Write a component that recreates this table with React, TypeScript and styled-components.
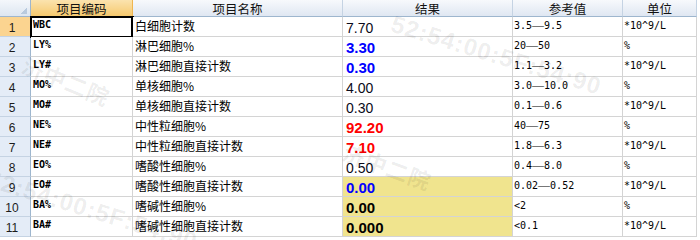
import styled, { createGlobalStyle, css } from 'styled-components';
import { Fragment } from 'react';

const GlobalStyle = createGlobalStyle`
  html, body {
    margin: 0;
    padding: 0;
    background: #ffffff;
  }
  #root {
    width: 700px;
    height: 240px;
    overflow: hidden;
  }`

const GRID = '#d4d4d4';
const HEAD_LINE = '#9eb6ce';

type Tone = 'plain' | 'blue' | 'red' | 'bold';

type LabRow = {
  code: string,
  name: string,
  value: string,
  tone: Tone,
  flagged?: boolean,
  low?: string,
  high?: string,
  unit: string
};

const UNIT = '*10^9/L';

const rows: LabRow[] = [
  { code: 'WBC', name: '白细胞计数', value: '7.70', tone: 'plain', low: '3.5', high: '9.5', unit: UNIT },
  { code: 'LY%', name: '淋巴细胞%', value: '3.30', tone: 'blue', low: '20', high: '50', unit: '%' },
  { code: 'LY#', name: '淋巴细胞直接计数', value: '0.30', tone: 'blue', low: '1.1', high: '3.2', unit: UNIT },
  { code: 'MO%', name: '单核细胞%', value: '4.00', tone: 'plain', low: '3.0', high: '10.0', unit: '%' },
  { code: 'MO#', name: '单核细胞直接计数', value: '0.30', tone: 'plain', low: '0.1', high: '0.6', unit: UNIT },
  { code: 'NE%', name: '中性粒细胞%', value: '92.20', tone: 'red', low: '40', high: '75', unit: '%' },
  { code: 'NE#', name: '中性粒细胞直接计数', value: '7.10', tone: 'red', low: '1.8', high: '6.3', unit: UNIT },
  { code: 'EO%', name: '嗜酸性细胞%', value: '0.50', tone: 'plain', low: '0.4', high: '8.0', unit: '%' },
  { code: 'EO#', name: '嗜酸性细胞直接计数', value: '0.00', tone: 'blue', flagged: true, low: '0.02', high: '0.52', unit: UNIT },
  { code: 'BA%', name: '嗜碱性细胞%', value: '0.00', tone: 'bold', flagged: true, low: '<2', unit: '%' },
  { code: 'BA#', name: '嗜碱性细胞直接计数', value: '0.000', tone: 'bold', flagged: true, low: '<0.1', unit: UNIT },
];

const columns = ['项目编码', '项目名称', '结果', '参考值', '单位'];

const Frame = styled.div`
  position: relative;
  width: 700px;
  height: 240px;
  overflow: hidden;`

const Sheet = styled.div`
  display: grid;
  grid-template-columns: 31px 102px 210px 170px 110px 74px;
  grid-template-rows: 17px;
  grid-auto-rows: 20px;`

const Corner = styled.div`
  box-sizing: border-box;
  border-right: 1px solid ${HEAD_LINE};
  border-bottom: 1px solid ${HEAD_LINE};
  background:
    linear-gradient(135deg, transparent 72%, #b9cade 72%) no-repeat right 3px bottom 2px / 11px 11px,
    linear-gradient(#f4f7fb, #dde6f1);`

const ColumnHead = styled.div<{ $active?: boolean }>`
  box-sizing: border-box;
  display: flex;
  align-items: center;
  justify-content: center;
  border-right: 1px solid #c5d3e3;
  border-bottom: 1px solid ${HEAD_LINE};
  background: linear-gradient(#f7f9fc, #dfe7f2);
  font-family: "Noto Sans CJK SC", sans-serif;
  font-size: 12.5px;
  line-height: 15px;
  color: #111;
  ${p => p.$active && css`
    background: linear-gradient(#fbe3ae, #f6c96e);
    border-right-color: #f0b650;
    border-bottom-color: #e9a73b;
  `}`

const RowHead = styled.div<{ $active?: boolean }>`
  box-sizing: border-box;
  display: flex;
  align-items: center;
  justify-content: center;
  padding: 2px 6px 0 0;
  border-right: 1px solid ${HEAD_LINE};
  border-bottom: 1px solid #c5d3e3;
  background: #e4ecf7;
  font-family: "Liberation Sans", Arial, sans-serif;
  font-size: 12px;
  color: #1c1c1c;
  ${p => p.$active && css`
    background: #fbd490;
    border-right-color: #e9a73b;
  `}`

const Cell = styled.div<{ $flagged?: boolean }>`
  box-sizing: border-box;
  position: relative;
  display: flex;
  align-items: flex-start;
  border-right: 1px solid ${GRID};
  border-bottom: 1px solid ${GRID};
  background: ${p => p.$flagged ? '#f0e48e' : '#ffffff'};
  white-space: nowrap;
  color: #000;`

const CodeCell = styled(Cell)<{ $selected?: boolean }>`
  padding: 2px 0 0 2px;
  font-family: "DejaVu Sans Mono", monospace;
  font-size: 10px;
  font-weight: bold;
  line-height: 12px;
  ${p => p.$selected && css`
    &::after {
      content: '';
      position: absolute;
      inset: -1px -2px -2px -1px;
      border: 2px solid #000;
      border-right-width: 3px;
      pointer-events: none;
    }
  `}`

const NameCell = styled(Cell)`
  padding: 2px 0 0 2px;
  font-family: "Noto Sans CJK SC", sans-serif;
  font-size: 12px;
  line-height: 14px;`

const toneColor: Record<Tone, string> = {
  plain: '#0b0b1a',
  blue: '#0000ff',
  red: '#ff0000',
  bold: '#000000',
};

const ResultCell = styled(Cell)<{ $tone: Tone }>`
  padding: 3px 0 0 3px;
  font-family: "Liberation Sans", Arial, sans-serif;
  font-size: ${p => p.$tone === 'plain' ? '14px' : '15px'};
  font-weight: ${p => p.$tone === 'plain' ? 'normal' : 'bold'};
  line-height: 16px;
  color: ${p => toneColor[p.$tone]};`

const TextCell = styled(Cell)`
  padding: 3px 0 0 1px;
  font-family: "DejaVu Sans Mono", monospace;
  font-size: 10px;
  line-height: 12px;`

const Dash = styled.span`
  display: inline-block;
  width: 12px;
  text-align: center;
  transform: scaleX(2);`

const Watermark = styled.div<{ $x: number, $y: number, $angle: number, $size: number }>`
  position: absolute;
  left: ${p => p.$x}px;
  top: ${p => p.$y}px;
  transform: rotate(${p => p.$angle}deg);
  transform-origin: left top;
  font-family: "Liberation Sans", "Noto Sans CJK SC", sans-serif;
  font-size: ${p => p.$size}px;
  font-weight: bold;
  letter-spacing: 1px;
  color: rgba(0, 0, 0, 0.08);
  white-space: nowrap;
  pointer-events: none;`

export default function App() {
  return (
    <Frame>
      <GlobalStyle />
      <Sheet>
        <Corner />
        {columns.map((c, i) => (
          <ColumnHead key={c} $active={i === 0}>{c}</ColumnHead>
        ))}
        {rows.map((r, i) => (
          <Fragment key={i}>
            <RowHead $active={i === 0}>{i + 1}</RowHead>
            <CodeCell $selected={i === 0}>{r.code}</CodeCell>
            <NameCell>{r.name}</NameCell>
            <ResultCell $tone={r.tone} $flagged={r.flagged}>{r.value}</ResultCell>
            <TextCell>
              {r.low}
              {r.high !== undefined && <><Dash>—</Dash>{r.high}</>}
            </TextCell>
            <TextCell>{r.unit}</TextCell>
          </Fragment>
        ))}
      </Sheet>
      <Watermark $x={396} $y={10} $angle={17} $size={24}>52:54:00:5F:54:90</Watermark>
      <Watermark $x={30} $y={48} $angle={22} $size={22}>济中二院</Watermark>
      <Watermark $x={350} $y={135} $angle={20} $size={22}>济中二院</Watermark>
      <Watermark $x={-8} $y={165} $angle={17} $size={24}>52:54:00:5F:54:90</Watermark>
    </Frame>
  );
}
